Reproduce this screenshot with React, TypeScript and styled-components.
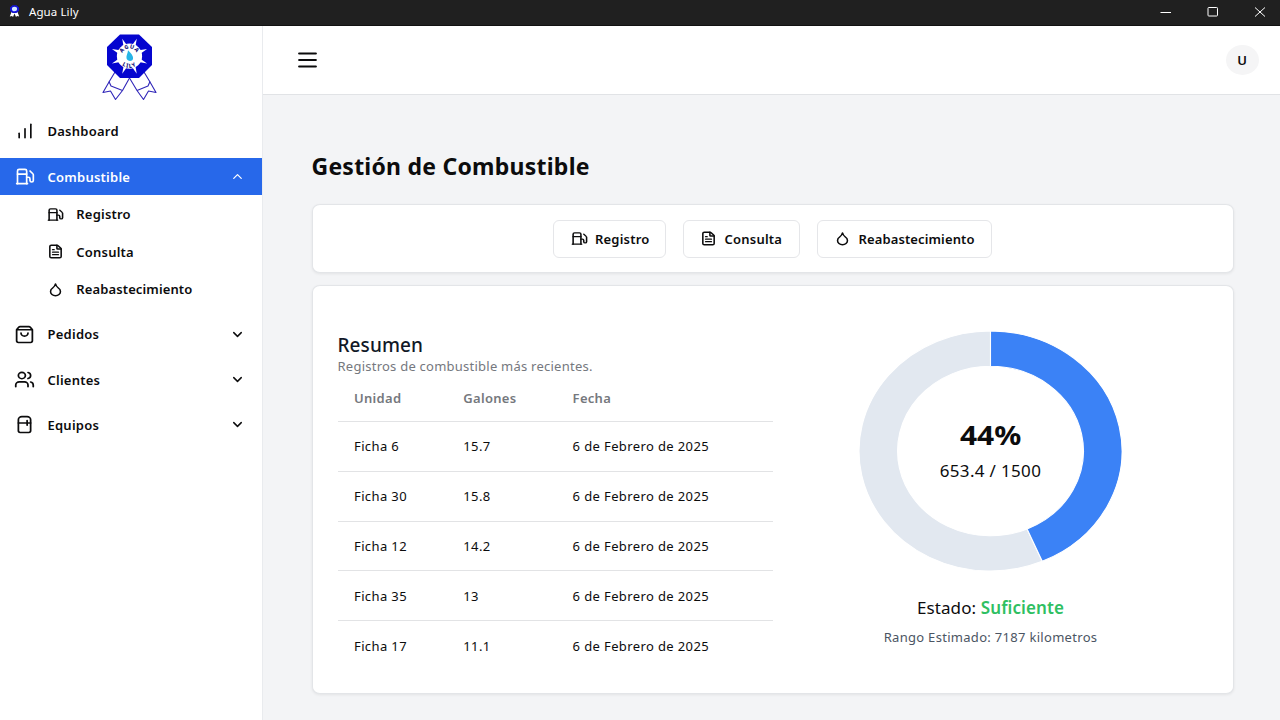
import React from "react";
import styled, { createGlobalStyle, css } from "styled-components";
import {
  ChartNoAxesColumnIncreasing,
  ChevronDown,
  ChevronUp,
  Droplet,
  FileText,
  Fuel,
  Menu,
  Refrigerator,
  ShoppingBag,
  Users,
  type LucideIcon,
} from "lucide-react";

const GlobalStyle = createGlobalStyle`
  * { box-sizing: border-box; }
  body {
    margin: 0;
    overflow: hidden;
    font-family: "Noto Sans", "Open Sans", sans-serif;
    font-size: 13px;
    color: #0c0c0d;
    background: #f3f4f6;
  }
  h1, h2, p { margin: 0; }
  svg { display: block; flex: none; }
`;

const Window = styled.div`
  display: flex;
  flex-direction: column;
  width: 1280px;
  height: 720px;
`;

const TitleBar = styled.header`
  display: flex;
  align-items: center;
  flex: none;
  height: 26px;
  padding: 0 14.5px 2px 8px;
  background: #202020;
  border-bottom: 1px solid #121212;
  color: #fff;
`;

const AppName = styled.span`
  flex: 1;
  margin-left: 8px;
  font-size: 11.5px;
  letter-spacing: 0.1px;
  line-height: 22px;
`;

const WindowControls = styled.div`
  display: flex;
  align-items: center;
  gap: 35px;
`;

const Body = styled.div`
  display: flex;
  flex: 1;
  min-height: 0;
`;

const Sidebar = styled.aside`
  display: flex;
  flex-direction: column;
  flex: none;
  width: 263px;
  background: #fff;
  border-right: 1px solid #e9ebee;
`;

const Brand = styled.div`
  display: flex;
  height: 86.7px;
  padding: 8px 0 0 102px;
`;

const Nav = styled.nav`
  display: flex;
  flex-direction: column;
  gap: 7.6px;
`;

const NavItem = styled.a<{ $active?: boolean }>`
  display: flex;
  align-items: center;
  height: 37.5px;
  padding: 0 17.5px 0 13.5px;
  font-weight: 600;
  ${(p) =>
    p.$active &&
    css`
      background: #2768ea;
      color: #fff;
    `}
`;

const NavIcon = styled.span`
  display: flex;
  justify-content: center;
  width: 22px;
  margin-right: 12px;
`;

const Label = styled.span<{ $track?: number }>`
  line-height: 18px;
  white-space: nowrap;
  letter-spacing: ${(p) => p.$track ?? 0.24}px;
`;

const NavLabel = styled(Label)`
  flex: 1;
`;

const SubNav = styled.div`
  display: flex;
  flex-direction: column;
  margin-top: -7.6px;
`;

const SubItem = styled.a`
  display: flex;
  align-items: center;
  gap: 12px;
  height: 37.6px;
  padding-left: 47.3px;
  font-weight: 600;
`;

const Main = styled.main`
  display: flex;
  flex-direction: column;
  flex: 1;
  min-width: 0;
`;

const TopBar = styled.div`
  display: flex;
  align-items: center;
  justify-content: space-between;
  flex: none;
  height: 69px;
  padding: 0 21.5px 0 32px;
  background: #fff;
  border-bottom: 1px solid #e1e3e6;
`;

const Avatar = styled.div`
  display: flex;
  align-items: center;
  justify-content: center;
  width: 33px;
  height: 30px;
  border-radius: 50%;
  background: #f5f5f6;
  font-weight: 600;
`;

const Content = styled.div`
  display: flex;
  flex-direction: column;
  padding: 54px 46.5px 0 48.5px;
`;

const PageTitle = styled.h1`
  height: 36px;
  margin-bottom: 19.5px;
  font-size: 23px;
  line-height: 34px;
  font-weight: 700;
  letter-spacing: 0.24px;
  white-space: nowrap;
`;

const Card = styled.section`
  display: flex;
  background: #fff;
  border: 1px solid #e3e5e8;
  border-radius: 8px / 7px;
  box-shadow: 0 1px 3px rgba(0, 0, 0, 0.07);
`;

const ActionsCard = styled(Card)`
  align-items: center;
  justify-content: center;
  gap: 16.5px;
  height: 69px;
  margin-top: -0.5px;
  margin-bottom: 11.5px;
`;

const ActionButton = styled.button<{ $width: number }>`
  display: flex;
  align-items: center;
  gap: 7.5px;
  width: ${(p) => p.$width}px;
  height: 38px;
  padding: 0 0 0 16.5px;
  background: #fff;
  border: 1px solid #e5e6e9;
  border-radius: 6px;
  font: inherit;
  font-weight: 600;
  color: inherit;
`;

const SummaryCard = styled(Card)`
  height: 409px;
  padding: 45px 0 0 25px;
`;

const Summary = styled.div`
  width: 435px;
`;

const SummaryTitle = styled.h2`
  padding-top: 1px;
  font-size: 19px;
  line-height: 26px;
  font-weight: 500;
  letter-spacing: 0.1px;
  color: #111827;
`;

const SummaryNote = styled.p`
  padding-bottom: 1px;
  font-size: 13px;
  line-height: 17px;
  letter-spacing: 0.24px;
  color: #75787e;
  white-space: nowrap;
`;

const Table = styled.table`
  width: 435px;
  border-collapse: collapse;
  table-layout: fixed;
`;

const HeadCell = styled.th<{ $width?: number }>`
  width: ${(p) => (p.$width ? `${p.$width}px` : "auto")};
  height: 46px;
  padding: 0 0 1px 16.5px;
  text-align: left;
  font-weight: 600;
  letter-spacing: 0.3px;
  color: #75787d;
  border-bottom: 1px solid #e2e3e5;
`;

const Cell = styled.td`
  height: 49.8px;
  padding: 0 0 0 16.5px;
  font-size: 13px;
  letter-spacing: 0.38px;
  white-space: nowrap;
  border-bottom: 1px solid #e2e3e5;
  tr:last-child & {
    border-bottom: 0;
  }
`;

const Gauge = styled.div`
  display: flex;
  flex-direction: column;
  align-items: center;
  width: 263px;
  margin-left: 86.5px;
`;

const GaugeChart = styled.div`
  display: grid;
  place-items: center;
  height: 240px;
  > * {
    grid-area: 1 / 1;
  }
`;

const GaugeText = styled.div`
  display: flex;
  flex-direction: column;
  align-items: center;
  padding-top: 4px;
`;

const GaugePercent = styled.div`
  font-size: 27px;
  line-height: 37px;
  font-weight: 700;
  transform: scaleX(1.11);
`;

const GaugeAmount = styled.div`
  font-size: 17px;
  line-height: 36px;
  letter-spacing: 0.33px;
  white-space: nowrap;
`;

const Status = styled.p`
  margin-top: 24px;
  font-size: 17px;
  line-height: 26px;
  letter-spacing: 0.1px;
  white-space: nowrap;
`;

const StatusValue = styled.span`
  font-weight: 600;
  color: #2fbf62;
`;

const Range = styled.p`
  margin-top: 6px;
  font-size: 13px;
  line-height: 20px;
  letter-spacing: 0.3px;
  color: #4b5563;
  white-space: nowrap;
`;

type IconProps = { icon: LucideIcon; w: number; h: number; stroke?: number };

const Icon = ({ icon: Glyph, w, h, stroke = 2 }: IconProps) => (
  <Glyph width={w} height={h} strokeWidth={stroke} preserveAspectRatio="none" />
);

const RAYS = [22.5, 67.5, 112.5, 157.5, 202.5, 247.5, 292.5, 337.5];

const Logo = () => (
  <svg width="56" height="68" viewBox="0 0 56 68">
    <g fill="#fff" stroke="#2f25b8" strokeWidth="1.1" strokeLinejoin="round">
      <path d="M13 38 L7 48 L1 58.5 L8.5 57 L13.5 65.5 L20.5 56.5 L27.5 44 L24 40Z" />
      <path d="M7 47.5 L9 52 L20.5 56.5" fill="none" />
      <path d="M42 38 L48 48 L54 58.5 L46.5 57 L41.5 65.5 L35 56.5 L27.5 44 L31 40Z" />
      <path d="M48 47.5 L46 52 L35 56.5" fill="none" />
    </g>
    <path d="M18 .5 H37 L50 13 V31 L37 44 H18 L5 31 V13Z" fill="#0505cf" />
    <g transform="translate(27.5 22.2)">
      {RAYS.map((a) => (
        <path key={a} d="M-1.8 -11 L0 -19 L1.8 -11Z" fill="#fff" transform={`rotate(${a})`} />
      ))}
      <circle r="12.6" fill="#fff" />
      <path d="M-1.5 -6 C1 -3.5 4 -.5 3.5 2.5 C3 5.5 -2 5.5 -3 2 C-3.5 -1 -1.5 -3 -1.5 -6Z" fill="#27b4e6" />
    </g>
    <defs>
      <path id="arcTop" d="M19.7 22.2 A7.8 7.8 0 0 1 35.3 22.2" />
      <path id="arcBottom" d="M15.9 22.2 A11.6 11.6 0 0 0 39.1 22.2" />
    </defs>
    <g fontSize="5.6" fontWeight="800" fill="#15157a" textAnchor="middle">
      <text letterSpacing=".5">
        <textPath href="#arcTop" startOffset="50%">AGUA</textPath>
      </text>
      <text letterSpacing="1">
        <textPath href="#arcBottom" startOffset="50%">LILY</textPath>
      </text>
    </g>
  </svg>
);

const MiniLogo = () => (
  <svg width="13" height="13" viewBox="0 0 13 13">
    <path d="M3.5 7 L1.8 11.5 L4 11 L5 12 L6.5 8.5 L8 12 L9 11 L11.2 11.5 L9.5 7Z" fill="#fff" />
    <path d="M4.5 .3 H8.5 L11 2.5 V5.8 L8.5 8 H4.5 L2 5.8 V2.5Z" fill="#1212d6" />
    <ellipse cx="6.5" cy="4" rx="2.6" ry="2.3" fill="#cfe4ff" />
  </svg>
);

const Donut = ({ value, max }: { value: number; max: number }) => {
  const angle = (value / max) * Math.PI * 2;
  const point = (r: number, a: number) => `${120 + r * Math.sin(a)} ${120 - r * Math.cos(a)}`;
  const slice = (from: number, to: number) => {
    const large = to - from > Math.PI ? 1 : 0;
    return `M${point(120, from)} A120 120 0 ${large} 1 ${point(120, to)} L${point(84.8, to)} A84.8 84.8 0 ${large} 0 ${point(84.8, from)}Z`;
  };
  return (
    <svg width="263" height="240" viewBox="0 0 240 240" preserveAspectRatio="none" stroke="#fff" strokeWidth="1">
      <path d={slice(angle, Math.PI * 2)} fill="#e2e8f0" />
      <path d={slice(0, angle)} fill="#3b82f6" />
    </svg>
  );
};

const SUB_ITEMS = [
  { label: "Registro", icon: Fuel, width: 113, track: 0.2 },
  { label: "Consulta", icon: FileText, width: 117.5, track: 0.22 },
  { label: "Reabastecimiento", icon: Droplet, width: 175.5, track: 0.12 },
];

const SECTIONS = [
  { label: "Pedidos", icon: ShoppingBag },
  { label: "Clientes", icon: Users },
  { label: "Equipos", icon: Refrigerator },
];

const RECORDS = [
  ["Ficha 6", "15.7"],
  ["Ficha 30", "15.8"],
  ["Ficha 12", "14.2"],
  ["Ficha 35", "13"],
  ["Ficha 17", "11.1"],
];

export default function App() {
  return (
    <Window>
      <GlobalStyle />
      <TitleBar>
        <MiniLogo />
        <AppName>Agua Lily</AppName>
        <WindowControls>
          <svg width="12" height="12" viewBox="0 0 12 12" stroke="#fff" fill="none">
            <path d="M.5 6.5H11" />
          </svg>
          <svg width="12" height="12" viewBox="0 0 12 12" stroke="#fff" fill="none">
            <rect x="1" y="1.5" width="9.5" height="8.5" rx=".8" />
          </svg>
          <svg width="12" height="12" viewBox="0 0 12 12" stroke="#fff" fill="none">
            <path d="M1 1.5 11 10.5M11 1.5 1 10.5" />
          </svg>
        </WindowControls>
      </TitleBar>
      <Body>
        <Sidebar>
          <Brand>
            <Logo />
          </Brand>
          <Nav>
            <NavItem>
              <NavIcon>
                <Icon icon={ChartNoAxesColumnIncreasing} w={20} h={18} />
              </NavIcon>
              <NavLabel>Dashboard</NavLabel>
            </NavItem>
            <NavItem $active>
              <NavIcon>
                <Icon icon={Fuel} w={20} h={19} />
              </NavIcon>
              <NavLabel>Combustible</NavLabel>
              <Icon icon={ChevronUp} w={15} h={15} />
            </NavItem>
            <SubNav>
              {SUB_ITEMS.map((s) => (
                <SubItem key={s.label}>
                  <Icon icon={s.icon} w={17} h={15} stroke={2.2} />
                  <Label $track={s.track}>{s.label}</Label>
                </SubItem>
              ))}
            </SubNav>
            {SECTIONS.map((s) => (
              <NavItem key={s.label}>
                <NavIcon>
                  <Icon icon={s.icon} w={21} h={19} />
                </NavIcon>
                <NavLabel>{s.label}</NavLabel>
                <Icon icon={ChevronDown} w={15} h={15} stroke={2.3} />
              </NavItem>
            ))}
          </Nav>
        </Sidebar>
        <Main>
          <TopBar>
            <Icon icon={Menu} w={25} h={22} stroke={2.1} />
            <Avatar>U</Avatar>
          </TopBar>
          <Content>
            <PageTitle>Gestión de Combustible</PageTitle>
            <ActionsCard>
              {SUB_ITEMS.map((s) => (
                <ActionButton key={s.label} $width={s.width}>
                  <Icon icon={s.icon} w={17} h={15} stroke={2.2} />
                  <Label $track={s.track}>{s.label}</Label>
                </ActionButton>
              ))}
            </ActionsCard>
            <SummaryCard>
              <Summary>
                <SummaryTitle>Resumen</SummaryTitle>
                <SummaryNote>Registros de combustible más recientes.</SummaryNote>
                <Table>
                  <thead>
                    <tr>
                      <HeadCell $width={109.3}>Unidad</HeadCell>
                      <HeadCell $width={109.3}>Galones</HeadCell>
                      <HeadCell>Fecha</HeadCell>
                    </tr>
                  </thead>
                  <tbody>
                    {RECORDS.map(([unit, gallons]) => (
                      <tr key={unit}>
                        <Cell>{unit}</Cell>
                        <Cell>{gallons}</Cell>
                        <Cell>6 de Febrero de 2025</Cell>
                      </tr>
                    ))}
                  </tbody>
                </Table>
              </Summary>
              <Gauge>
                <GaugeChart>
                  <Donut value={653.4} max={1500} />
                  <GaugeText>
                    <GaugePercent>44%</GaugePercent>
                    <GaugeAmount>653.4 / 1500</GaugeAmount>
                  </GaugeText>
                </GaugeChart>
                <Status>
                  Estado: <StatusValue>Suficiente</StatusValue>
                </Status>
                <Range>Rango Estimado: 7187 kilometros</Range>
              </Gauge>
            </SummaryCard>
          </Content>
        </Main>
      </Body>
    </Window>
  );
}
